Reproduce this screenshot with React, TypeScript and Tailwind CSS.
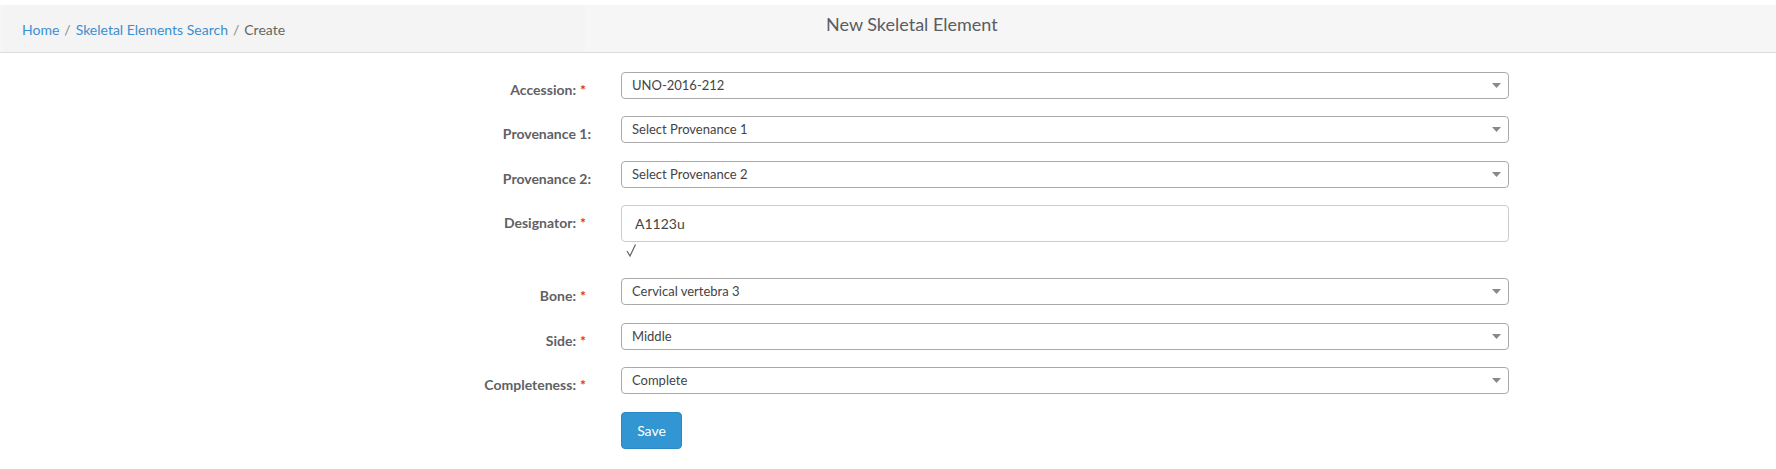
import React from "react";

const font = { fontFamily: "Lato, 'Open Sans', sans-serif" };

function Label({ text, required }: { text: string; required?: boolean }) {
  return (
    <div
      className={
        "relative w-[591px] shrink-0 text-right pt-[8px] text-[14px] leading-[20px] font-bold text-[#5f6165] " +
        (required ? "pr-[15px]" : "pr-0")
      }
    >
      {text}
      {required && <span className="absolute right-[5px] top-[8px] text-[#e0302a]">*</span>}
    </div>
  );
}

function Select({ value }: { value: string }) {
  return (
    <div className="ml-[30px] w-[888px] h-[27px] flex items-center justify-between border border-[#aaaaaa] rounded-[4px] bg-white pl-[10px] pr-[7px]">
      <span className="text-[13px] text-[#444] leading-[27px]">{value}</span>
      <svg width="9" height="5" viewBox="0 0 9 5">
        <path d="M0 0 L9 0 L4.5 5 Z" fill="#888" />
      </svg>
    </div>
  );
}

function SelectRow({ label, value, required }: { label: string; value: string; required?: boolean }) {
  return (
    <div className="flex h-[27px] mb-[17.5px]">
      <Label text={label} required={required} />
      <Select value={value} />
    </div>
  );
}

export default function App() {
  return (
    <div className="bg-white min-h-[469px]" style={font}>
      <div className="pt-[5px]">
        <div className="flex h-[48px] bg-[#f6f6f6] border-b border-[#dcdcdc]">
          <div className="ml-[2px] w-[583px] h-full bg-[#f4f4f4] rounded-[4px] flex items-center pl-[20px] pt-[2px] text-[14px]">
            <span className="text-[#3a8fd2]">Home</span>
            <span className="text-[#888] mx-[5px]">/</span>
            <span className="text-[#3a8fd2]">Skeletal Elements Search</span>
            <span className="text-[#888] mx-[5px]">/</span>
            <span className="text-[#666]">Create</span>
          </div>
          <div className="pl-[241px] pt-[8px] text-[18px] leading-[22px] text-[#5a5d62]">
            New Skeletal Element
          </div>
        </div>
      </div>

      <div className="pt-[18.5px]">
        <SelectRow label="Accession:" value="UNO-2016-212" required />
        <SelectRow label="Provenance 1:" value="Select Provenance 1" />
        <SelectRow label="Provenance 2:" value="Select Provenance 2" />

        <div className="flex h-[55.5px] mb-[17.5px]">
          <Label text="Designator:" required />
          <div className="ml-[30px] w-[888px]">
            <div className="h-[37px] border border-[#cccccc] rounded-[4px] flex items-center pl-[13px] text-[14px] text-[#444]">
              A1123u
            </div>
            <svg width="12" height="14" viewBox="0 0 12 14" className="ml-[5px] mt-[1px]">
              <path d="M1 8 L4 13 L9.5 1.5" fill="none" stroke="#5f6165" strokeWidth="1.2" />
            </svg>
          </div>
        </div>

        <SelectRow label="Bone:" value="Cervical vertebra 3" required />
        <SelectRow label="Side:" value="Middle" required />
        <SelectRow label="Completeness:" value="Complete" required />

        <div className="flex">
          <div className="w-[591px] shrink-0" />
          <button className="ml-[30px] w-[61px] h-[37px] bg-[#3196d2] border border-[#2b88c2] rounded-[4px] text-white text-[14px]">
            Save
          </button>
        </div>
      </div>
    </div>
  );
}
